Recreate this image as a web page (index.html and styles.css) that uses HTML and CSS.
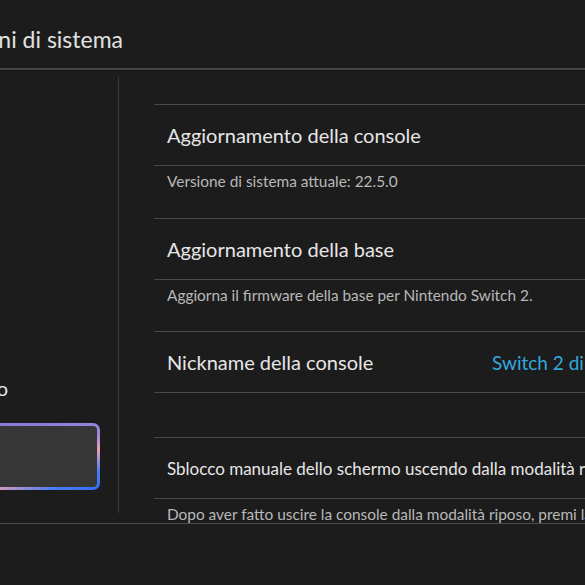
FILE: index.html
```html
<!DOCTYPE html>
<html lang="it">
<head>
<meta charset="utf-8">
<link rel="stylesheet" href="styles.css">
</head>
<body>
<div class="screen">
  <header class="header">
    <div class="title-box"><h1 class="title">Impostazioni di sistema</h1></div>
  </header>
  <main class="main">
    <nav class="side">
      <div class="side-item"><span class="side-label">Account Nintendo</span></div>
      <div class="side-item selected"><span class="side-label">Sistema</span></div>
    </nav>
    <section class="list">
      <div class="row"><span class="row-title">Aggiornamento della console</span></div>
      <div class="sub">Versione di sistema attuale: 22.5.0</div>
      <div class="row"><span class="row-title">Aggiornamento della base</span></div>
      <div class="sub short">Aggiorna il firmware della base per Nintendo Switch 2.</div>
      <div class="row row-value"><span class="row-title">Nickname della console</span><span class="value">Switch 2 di Mario</span></div>
      <div class="spacer"></div>
      <div class="row"><span class="row-title small">Sblocco manuale dello schermo uscendo dalla modalità riposo</span></div>
      <div class="sub">Dopo aver fatto uscire la console dalla modalità riposo, premi la stessa icona</div>
    </section>
  </main>
  <footer class="footer"></footer>
</div>
</body>
</html>
```
FILE: styles.css
```css
* { box-sizing: border-box; margin: 0; padding: 0; }
html, body { background: #1c1c1c; }
body {
  width: 585px;
  height: 585px;
  overflow: hidden;
  font-family: Lato, "Noto Sans", sans-serif;
  color: #e4e4e4;
}
.screen { width: 585px; height: 585px; display: flex; flex-direction: column; overflow: hidden; }
.header {
  height: 70px;
  flex: none;
  border-bottom: 2px solid #464646;
  box-shadow: 0 1px 0 #111;
  display: flex;
  align-items: flex-start;
}
.title-box {
  width: 123px;
  display: flex;
  justify-content: flex-end;
  padding-top: 25px;
}
.title {
  font-size: 23px;
  font-weight: 400;
  line-height: 28px;
  white-space: nowrap;
  color: #e2e2e2;
  flex: none;
}
.main {
  height: 453px;
  flex: none;
  display: flex;
  overflow: hidden;
}
.side {
  width: 119px;
  flex: none;
  margin-top: 7px;
  height: 436px;
  border-right: 1px solid #3a3a3a;
  display: flex;
  flex-direction: column;
  justify-content: flex-end;
  padding-bottom: 23px;
}
.side-item {
  height: 58px;
  display: flex;
  align-items: center;
  justify-content: flex-end;
  overflow: visible;
  width: 100px;
}
.side-label {
  white-space: nowrap;
  font-size: 20px;
  flex: none;
  padding-right: 92px;
  color: #e4e4e4;
}
.side-item.selected {
  height: 67px;
  margin-top: 6px;
  border-radius: 0 7px 7px 0;
  border: 3px solid transparent;
  border-left: none;
  background:
    linear-gradient(#363636, #363636) padding-box,
    linear-gradient(160deg, #8a78d8 0%, #9a86dc 45%, #e8a0b8 60%, #4a7cf0 82%, #2f6ef5 100%) border-box;
}
.side-item.selected .side-label { visibility: hidden; }
.list {
  flex: 1;
  margin-left: 35px;
  padding-top: 34px;
  min-width: 0;
}
.row {
  height: 61px;
  border-top: 1px solid #4a4a4a;
  display: flex;
  align-items: center;
  padding-left: 13px;
  white-space: nowrap;
}
.row-title { font-size: 20px; color: #e6e6e6; }
.row-title.small { font-size: 17px; }
.row-value { display: grid; grid-template-columns: 325px auto; align-items: center; }
.value { font-size: 19px; color: #33a8dc; }
.sub {
  height: 53px;
  border-top: 1px solid #4a4a4a;
  padding: 5px 0 0 13px;
  font-size: 15.4px;
  line-height: 20px;
  color: #b8b8b8;
  white-space: nowrap;
}
.sub.short { height: 52px; }
.spacer { height: 45px; border-top: 1px solid #4a4a4a; }
.footer {
  flex: 1;
  border-top: 1px solid #4a4a4a;
  background: #1c1c1c;
}
```
